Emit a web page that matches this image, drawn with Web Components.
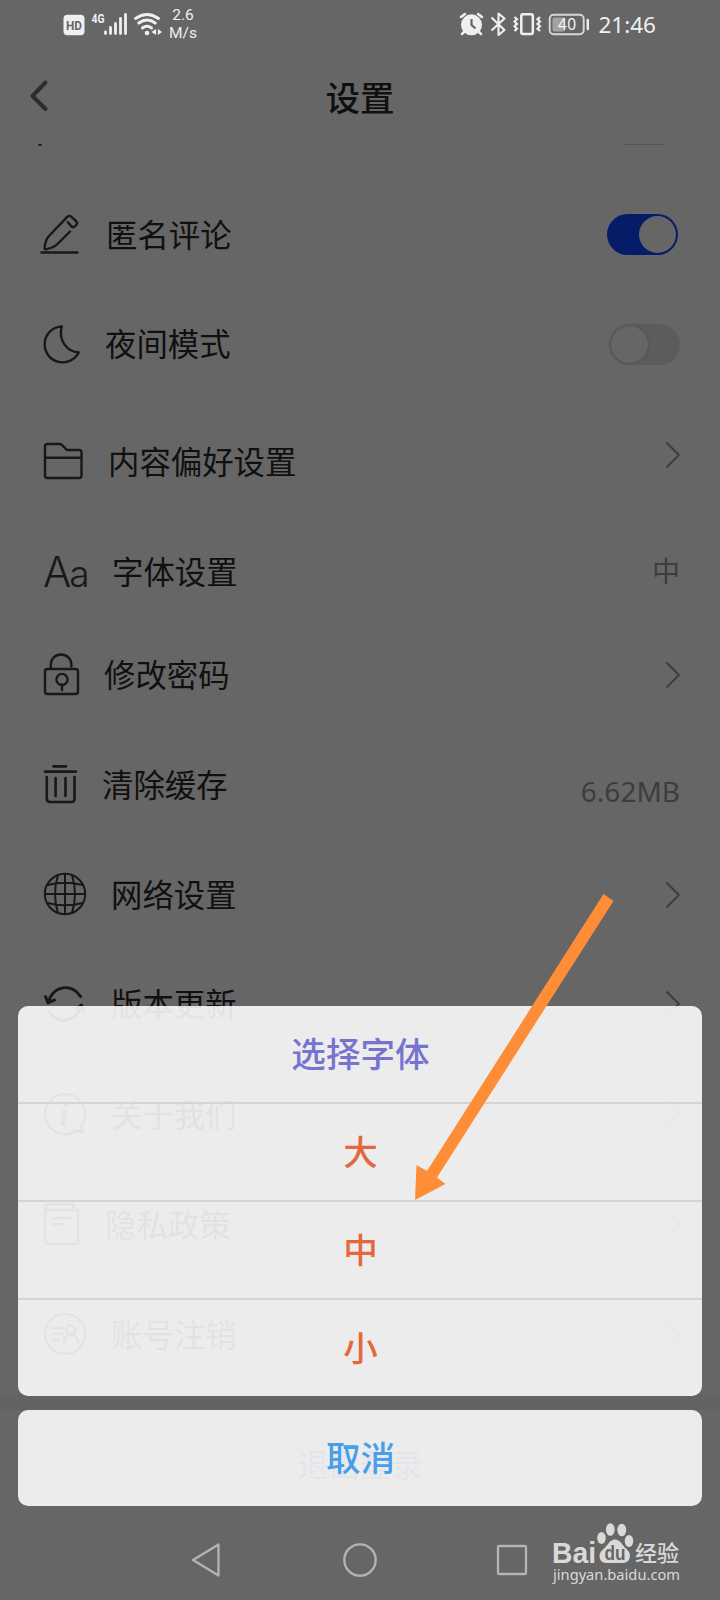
<!DOCTYPE html>
<html lang="zh-CN">
<head>
<meta charset="utf-8">
<title>设置</title>
<style>
html,body{margin:0;padding:0;background:#666}
body{width:720px;height:1600px;overflow:hidden;font-family:"Noto Sans","Noto Sans CJK SC",sans-serif}
</style>
</head>
<body>
<phone-screen>
  <status-bar></status-bar>
  <nav-header>设置</nav-header>
  <clipped-row></clipped-row>
  <setting-row icon="edit" top="60" label-x="106" shift="-0.5">匿名评论<toggle-switch slot="end" on></toggle-switch></setting-row>
  <setting-row icon="moon" top="49" label-x="105">夜间模式<toggle-switch slot="end"></toggle-switch></setting-row>
  <setting-row icon="folder" top="58" label-x="108" shift="-7.5">内容偏好设置<chevron-right slot="end"></chevron-right></setting-row>
  <setting-row icon="aa" top="50" label-x="112" shift="-1">字体设置<span slot="end">中</span></setting-row>
  <setting-row icon="lock" top="43" label-x="104" shift="-0.5">修改密码<chevron-right slot="end"></chevron-right></setting-row>
  <setting-row icon="trash" top="50" label-x="102" shift="6">清除缓存<span slot="end">6.62MB</span></setting-row>
  <setting-row icon="globe" top="50" label-x="111" shift="-0.5">网络设置<chevron-right slot="end"></chevron-right></setting-row>
  <setting-row icon="refresh" top="49" label-x="111">版本更新<chevron-right slot="end"></chevron-right></setting-row>
  <setting-row icon="info" top="51" label-x="111" shift="-1">关于我们<chevron-right slot="end"></chevron-right></setting-row>
  <setting-row icon="doc" top="50" label-x="105" shift="-1">隐私政策<chevron-right slot="end"></chevron-right></setting-row>
  <setting-row icon="account" top="50" label-x="111" shift="-1">账号注销<chevron-right slot="end"></chevron-right></setting-row>
  <logout-button>退出登录</logout-button>
  <system-nav></system-nav>
  <action-sheet slot="overlay">
    <sheet-option slot="options" kind="title">选择字体</sheet-option>
    <sheet-option slot="options">大</sheet-option>
    <sheet-option slot="options">中</sheet-option>
    <sheet-option slot="options">小</sheet-option>
    <sheet-option slot="cancel" kind="cancel">取消</sheet-option>
  </action-sheet>
  <pointer-arrow slot="overlay"></pointer-arrow>
  <site-watermark slot="overlay"></site-watermark>
</phone-screen>

<script>
const define = (name, render) => customElements.define(name, class extends HTMLElement {
  connectedCallback() {
    if (!this.shadowRoot) this.attachShadow({ mode: 'open' }).innerHTML = render(this);
  }
});

const line = (w = 2.4) => `fill="none" stroke="#181818" stroke-width="${w}" stroke-linecap="round" stroke-linejoin="round"`;
/* Each icon: [top of its 60px row, drawing] */
const ICONS = {
  edit: [205, `<g ${line()}><path d="M41.500 252.500H77.500M70 231.500L57 244.500Q54 247.500 46 249.300Q44.300 249.600 44.600 247.500Q45.500 240 48.500 236.500L67.500 216.700Q69.500 215 71.500 216.800L76 221Q78 223 76.200 225L74.300 226.800Q73 227.800 71.500 226.400L67.800 222.300"/></g>`],
  moon: [314, `<g ${line()}><path d="M61.800 326.400A18 18 0 1 0 78.800 352.300C67 352 58 340 61.800 326.400Z"/></g>`],
  folder: [432, `<g ${line()}><path d="M45 476V446.500Q45 444 47.500 444H59.500Q61 444 62 445L66 449.200Q67 450 68.500 450H79Q81.500 450 81.500 452.500V475.500Q81.500 478 79 478H47.500Q45 478 45 475.500ZM45 457.800H81.500"/></g>`],
  aa: [542, `<text x="43" y="586.500" font-family="Inter,'Open Sans',sans-serif" font-weight="300" font-size="42" letter-spacing="-2" fill="#181818">A<tspan font-size="37">a</tspan></text>`],
  lock: [645, `<g ${line()}><rect x="45" y="669" width="33" height="25" rx="2.500"/><path d="M50.800 668.500V664.500A10.300 10 0 0 1 71.400 664.500V666.500M62 684.500V690"/><circle cx="62" cy="679.500" r="5.600"/></g>`],
  trash: [755, `<g ${line(2.600)}><path d="M53.500 766.400H66M45 771.600H76M46.800 777V798.500Q46.800 802 50 802H71.500Q74.500 802 74.500 798.500V777M55.600 778V796M65.500 778V796"/></g>`],
  globe: [865, `<g ${line(2)}><circle cx="65" cy="894" r="20.200"/><path d="M65 874V914M45 894H85M58 875.200Q52 894 58 913M72 875.200Q78 894 72 913M47.500 885Q65 880.500 82.500 885M47.500 903Q65 907.500 82.500 903"/></g>`],
  refresh: [974, `<g ${line(2.900)}><path d="M49 1001A17 17 0 0 1 80.500 996.500M49.500 1012.500A17 17 0 0 0 80.500 1006M45.500 996.500L48 1003L54.500 1000M76 1009L81.500 1005L84 1011"/></g>`],
  info: [1085, `<g ${line()}><path d="M76.500 1130.500A20 20 0 1 1 80.500 1126.800L83 1132.500Z"/></g><text x="59.500" y="1126" font-family="Liberation Serif,serif" font-style="italic" font-weight="700" font-size="33" fill="#181818">i</text>`],
  doc: [1195, `<g ${line()}><path d="M45 1210V1241Q45 1244 48 1244H78V1210H45V1207Q45 1204 48 1204H73.500V1209M52.500 1218H70M52.500 1224.200H62.500"/></g>`],
  account: [1305, `<g ${line()}><circle cx="65" cy="1334" r="20"/><circle cx="70.500" cy="1330" r="4.500"/><path d="M64 1342.500A7 8 0 0 1 78 1342.500M52.500 1328H62.500M52.500 1334H62M52.500 1340H59.500"/></g>`]
};

define('phone-screen', () => `
<style>
:host{display:flex;flex-direction:column;position:relative;width:720px;height:1600px;background:#666;overflow:hidden}
</style><slot></slot><slot name="overlay"></slot>`);

define('status-bar', () => `
<style>
:host{display:flex;justify-content:space-between;align-items:flex-start;height:50px;padding:0 64px 0 60px;box-sizing:border-box;color:#f0f0f0}
.left,.right{display:flex;align-items:flex-start}
svg{display:block}
.speed{font:15.500px/18px Roboto,sans-serif;text-align:center;width:30px;padding-top:6px;margin-left:3px}
.time{font:22.500px/50px "Noto Sans",sans-serif;width:65px;text-align:right;white-space:nowrap}
</style>
<div class="left">
<svg width="105" height="50" viewBox="60 0 105 50">
 <rect x="63.500" y="14.700" width="21" height="20.600" rx="4" fill="#f0f0f0"/>
 <text x="66" y="30" font-family="Roboto,sans-serif" font-weight="700" font-size="13" textLength="16" lengthAdjust="spacingAndGlyphs" fill="#666">HD</text>
 <text x="91.500" y="23" font-family="Roboto,sans-serif" font-weight="700" font-size="13.500" textLength="13" lengthAdjust="spacingAndGlyphs" fill="#f0f0f0">4G</text>
 <g stroke="#f0f0f0" stroke-width="2.800" stroke-linecap="round"><path d="M105.500 32V33.500M110.500 27.500V33.500M115.500 23.500V33.500M120.500 18.500V33.500M125.500 14.500V33.500"/></g>
 <g fill="none" stroke="#f0f0f0" stroke-width="3" stroke-linecap="round"><path d="M135.500 18.500Q147 10.500 158.500 18.500M138.800 23Q147 17 155.200 23M142.500 28Q147 24.500 151.500 28"/></g>
 <circle cx="147" cy="33" r="2.300" fill="#f0f0f0"/>
 <path d="M156 29V35L151.500 32ZM157.800 29V35L162 32Z" fill="#f0f0f0"/>
</svg><div class="speed">2.6<br>M/s</div></div>
<div class="right">
<svg width="132" height="50" viewBox="459 0 132 50">
 <circle cx="471.500" cy="24.800" r="10.500" fill="#f0f0f0"/>
 <path d="M461 17L465 14M482 17L478 14M464.500 31.500L462 34M478.500 31.500L481 34" stroke="#f0f0f0" stroke-width="2.500" stroke-linecap="round"/>
 <path d="M471.500 19V25L475.500 28.500" fill="none" stroke="#666" stroke-width="2.200"/>
 <path d="M491.500 17.500L504.500 30L498.500 35V13.500L504.500 18.500L491.500 30.500" fill="none" stroke="#f0f0f0" stroke-width="2.100" stroke-linejoin="round"/>
 <rect x="521.300" y="14.300" width="11.500" height="19.800" rx="1.800" fill="none" stroke="#f0f0f0" stroke-width="2.500"/>
 <path d="M514.500 17L517 19.200L514.500 21.500L517 24L514.500 26.300L517 28.700L514.500 31M540 17L537.500 19.200L540 21.500L537.500 24L540 26.300L537.500 28.700L540 31" fill="none" stroke="#f0f0f0" stroke-width="2.200"/>
 <rect x="549.700" y="14.800" width="34" height="19.500" rx="4" fill="none" stroke="#d8d8d8" stroke-width="1.900"/>
 <rect x="552.500" y="17.500" width="12.500" height="14" rx="2" fill="#a3a3a3"/>
 <text x="558" y="30" font-family="Noto Sans,sans-serif" font-size="15.500" textLength="18" fill="#f4f4f4">40</text>
 <path d="M587.800 20V29" stroke="#f0f0f0" stroke-width="2.400" stroke-linecap="round"/>
</svg><div class="time">21:46</div></div>`);

define('nav-header', () => `
<style>
:host{display:grid;grid-template-columns:60px 1fr 60px;align-items:center;height:95px;color:#101010}
svg{display:block}
h1{margin:0;font-size:34.500px;font-weight:500;line-height:40px;text-align:center}
</style>
<svg width="60" height="95" viewBox="0 50 60 95"><path d="M45.500 82.500L32.500 96L45.500 109" fill="none" stroke="#2b2c2f" stroke-width="4" stroke-linecap="round" stroke-linejoin="round"/></svg>
<h1><slot></slot></h1>`);

/* Bottom sliver of the row that has scrolled under the header */
define('clipped-row', () => `
<style>
:host{display:flex;justify-content:space-between;height:1px;margin-top:-1px;padding:0 56px 0 38px}
i{display:block;width:4px;height:2px;background:#1c1c1c;border-radius:0 0 2px 2px}
b{display:block;width:40px;height:1px;background:#555}
</style><i></i><b></b>`);

define('setting-row', el => {
  const [y, art] = ICONS[el.getAttribute('icon')];
  const w = el.getAttribute('label-x') - 40;
  return `
<style>
:host{display:flex;align-items:center;height:60px;flex:none;margin-top:${el.getAttribute('top')}px;padding:0 40px;color:#101010;font-size:31.400px;line-height:40px}
svg{display:block;flex:none;overflow:visible}
.label{flex:1;white-space:nowrap;font-weight:400;margin-top:0}
.end{display:flex;color:#3d3d3d;font-size:28px;margin-top:${2 * (el.getAttribute('shift') || 0)}px}
</style>
<svg width="${w}" height="60" viewBox="40 ${y} ${w} 60">${art}</svg>
<div class="label"><slot></slot></div><div class="end"><slot name="end"></slot></div>`;
});

define('toggle-switch', el => {
  const on = el.hasAttribute('on');
  return `
<style>
:host{display:flex;align-items:center;justify-content:${on ? 'flex-end' : 'flex-start'};box-sizing:border-box;width:71px;height:41px;padding:2px;border-radius:21px;background:${on ? '#051d68' : '#5c5c5c'};margin-right:${on ? 2 : 0}px}
i{width:37px;height:37px;border-radius:50%;background:#666;box-shadow:${on ? 'none' : '0 0 3px #505050'}}
</style><i></i>`;
});

define('chevron-right', () => `
<style>:host{display:block}svg{display:block}</style>
<svg width="15" height="28" viewBox="0 0 15 28"><path d="M1.500 1.500L14 14L1.500 26.500" fill="none" stroke="#3c3c3c" stroke-width="1.900"/></svg>`);

define('logout-button', () => `
<style>
:host{display:flex;align-items:center;justify-content:center;box-sizing:border-box;flex:none;height:110px;margin-top:30px;border-top:15px solid #636363;color:#18285e;font-size:31.300px;line-height:40px}
span{padding-top:15px}
</style><span><slot></slot></span>`);

define('action-sheet', () => `
<style>
:host{position:absolute;left:18px;right:18px;bottom:94px;display:flex;flex-direction:column;gap:14px}
.card{display:flex;flex-direction:column;gap:2px;border-radius:10px;overflow:hidden;background:rgba(255,255,255,.88)}
</style>
<div class="card"><slot name="options"></slot></div>
<div class="card"><slot name="cancel"></slot></div>`);

define('sheet-option', el => {
  const k = el.getAttribute('kind');
  const c = k === 'title' ? '#7774cf' : k === 'cancel' ? '#469fe8' : '#e4683f';
  return `
<style>
:host{display:flex;align-items:center;justify-content:center;height:96px;color:${c};font-size:34.600px;line-height:40px;font-weight:500;${k ? '' : 'box-shadow:0 -2px 0 #d4d4d4'}}
span{padding-left:1px}
</style><span><slot></slot></span>`;
});

define('system-nav', () => `
<style>
:host{display:flex;align-items:center;gap:121px;flex:1;padding:15px 0 0 191px;box-sizing:border-box}
svg{display:block}
</style>
<svg width="31" height="36" viewBox="191 1542 31 36"><path d="M218.500 1544.500V1575.500L193 1560Z" fill="none" stroke="#b4b4b4" stroke-width="2.300" stroke-linejoin="round"/></svg>
<svg width="34" height="36" viewBox="343 1542 34 36"><circle cx="360" cy="1560" r="15.700" fill="none" stroke="#b4b4b4" stroke-width="2.300"/></svg>
<svg width="32" height="36" viewBox="498 1542 32 36" overflow="visible"><rect x="498" y="1546" width="28" height="28" rx="1" fill="none" stroke="#b4b4b4" stroke-width="2.300"/></svg>`);

define('pointer-arrow', () => `
<style>:host{position:absolute;left:400px;top:880px;width:230px;height:330px}svg{display:block}</style>
<svg width="230" height="330" viewBox="400 880 230 330"><path d="M603.500 894L613.500 901L437 1177.500L445.500 1184L415 1200L416.500 1165L427 1171Z" fill="#ff8d38"/></svg>`);

define('site-watermark', () => `
<style>:host{position:absolute;left:548px;top:1518px;width:140px;height:72px}svg{display:block}</style>
<svg width="140" height="72" viewBox="548 1518 140 72" fill="#d9d9d9">
 <text x="552" y="1562.500" font-family="Liberation Sans,sans-serif" font-weight="700" font-size="30" textLength="44" lengthAdjust="spacingAndGlyphs">Bai</text>
 <ellipse cx="601.500" cy="1538" rx="4.300" ry="6"/><ellipse cx="610.300" cy="1529.500" rx="4.400" ry="6.300"/><ellipse cx="621.800" cy="1530" rx="4.400" ry="6.300"/><ellipse cx="629" cy="1541" rx="4.300" ry="6"/>
 <path d="M615 1539.500Q619 1539.500 622 1544Q624 1547 627 1549.500Q631 1553.500 629.500 1558.500Q627.500 1563.500 621.500 1563H608Q601.500 1563.500 599.800 1558.500Q598.500 1553.500 602.500 1550Q606 1547 608 1544Q611 1539.500 615 1539.500Z"/>
 <text x="604.500" y="1560" font-family="Liberation Sans,sans-serif" font-weight="700" font-size="20" textLength="21" lengthAdjust="spacingAndGlyphs" fill="#666">du</text>
 <text x="635" y="1561" font-family="Noto Sans CJK SC,sans-serif" font-weight="500" font-size="22" textLength="44">经验</text>
 <text x="553" y="1579.500" font-family="Noto Sans,sans-serif" font-size="15" textLength="127" lengthAdjust="spacingAndGlyphs">jingyan.baidu.com</text>
</svg>`);
</script>
</body>
</html>
